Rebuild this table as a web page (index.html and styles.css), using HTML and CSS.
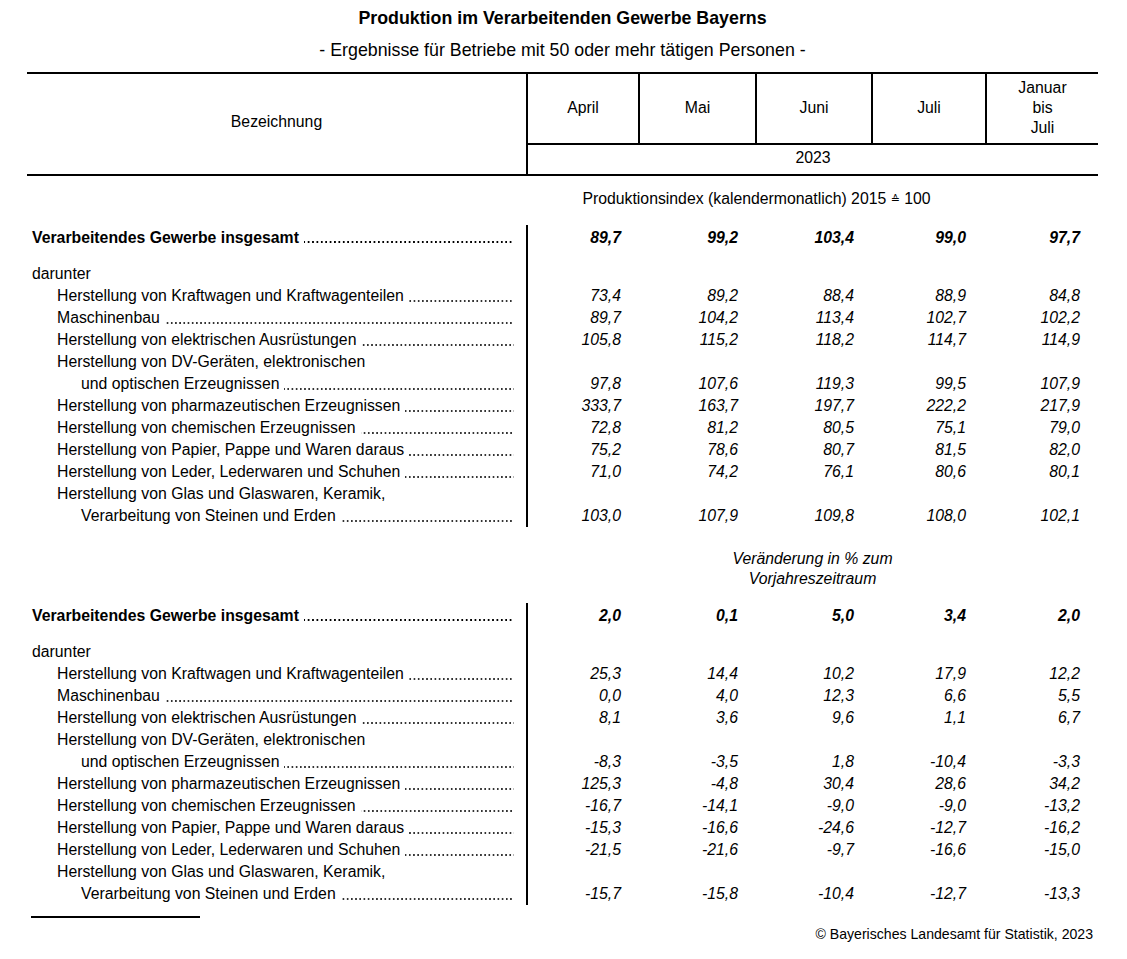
FILE: index.html
```html
<!DOCTYPE html>
<html lang="de">
<head>
<meta charset="utf-8">
<title>Produktion im Verarbeitenden Gewerbe Bayerns</title>
<link rel="stylesheet" href="styles.css">
</head>
<body>
<div class="page">
  <h1 class="title">Produktion im Verarbeitenden Gewerbe Bayerns</h1>
  <p class="subtitle">- Ergebnisse für Betriebe mit 50 oder mehr tätigen Personen -</p>
  <table class="tbl">
    <colgroup>
      <col class="c-lbl"><col class="c-apr"><col class="c-mai"><col class="c-jun"><col class="c-jul"><col class="c-jan">
    </colgroup>
    <thead>
      <tr class="h1">
        <th rowspan="2" class="h-lbl">Bezeichnung</th>
        <th class="h-m">April</th>
        <th class="h-m">Mai</th>
        <th class="h-m">Juni</th>
        <th class="h-m">Juli</th>
        <th class="h-m h-last">Januar<br>bis<br>Juli</th>
      </tr>
      <tr class="h2">
        <th colspan="5" class="h-year">2023</th>
      </tr>
    </thead>
    <tbody>
      <tr class="cap cap1">
        <td></td>
        <td colspan="4">Produktionsindex (kalendermonatlich) 2015 <span class="corr">≙</span> 100</td>
        <td></td>
      </tr>
      <tr class="tot">
        <td class="lbl"><div class="l"><span class="t">Verarbeitendes Gewerbe insgesamt</span><span class="dots"></span></div></td>
        <td class="n">89,7</td><td class="n">99,2</td><td class="n">103,4</td><td class="n jl">99,0</td><td class="n">97,7</td>
      </tr>
      <tr class="gap"><td class="lbl"></td><td colspan="5"></td></tr>
      <tr class="row"><td class="lbl"><div class="l">darunter</div></td><td colspan="5"></td></tr>
      <tr class="row"><td class="lbl in1"><div class="l"><span class="t">Herstellung von Kraftwagen und Kraftwagenteilen</span><span class="dots"></span></div></td>
        <td class="n">73,4</td><td class="n">89,2</td><td class="n">88,4</td><td class="n jl">88,9</td><td class="n">84,8</td></tr>
      <tr class="row"><td class="lbl in1"><div class="l"><span class="t">Maschinenbau</span><span class="dots"></span></div></td>
        <td class="n">89,7</td><td class="n">104,2</td><td class="n">113,4</td><td class="n jl">102,7</td><td class="n">102,2</td></tr>
      <tr class="row"><td class="lbl in1"><div class="l"><span class="t">Herstellung von elektrischen Ausrüstungen</span><span class="dots"></span></div></td>
        <td class="n">105,8</td><td class="n">115,2</td><td class="n">118,2</td><td class="n jl">114,7</td><td class="n">114,9</td></tr>
      <tr class="row"><td class="lbl in1"><div class="l">Herstellung von DV-Geräten, elektronischen</div></td><td colspan="5"></td></tr>
      <tr class="row"><td class="lbl in2"><div class="l"><span class="t">und optischen Erzeugnissen</span><span class="dots"></span></div></td>
        <td class="n">97,8</td><td class="n">107,6</td><td class="n">119,3</td><td class="n jl">99,5</td><td class="n">107,9</td></tr>
      <tr class="row"><td class="lbl in1"><div class="l"><span class="t">Herstellung von pharmazeutischen Erzeugnissen</span><span class="dots"></span></div></td>
        <td class="n">333,7</td><td class="n">163,7</td><td class="n">197,7</td><td class="n jl">222,2</td><td class="n">217,9</td></tr>
      <tr class="row"><td class="lbl in1"><div class="l"><span class="t">Herstellung von chemischen Erzeugnissen</span><span class="dots"></span></div></td>
        <td class="n">72,8</td><td class="n">81,2</td><td class="n">80,5</td><td class="n jl">75,1</td><td class="n">79,0</td></tr>
      <tr class="row"><td class="lbl in1"><div class="l"><span class="t">Herstellung von Papier, Pappe und Waren daraus</span><span class="dots"></span></div></td>
        <td class="n">75,2</td><td class="n">78,6</td><td class="n">80,7</td><td class="n jl">81,5</td><td class="n">82,0</td></tr>
      <tr class="row"><td class="lbl in1"><div class="l"><span class="t">Herstellung von Leder, Lederwaren und Schuhen</span><span class="dots"></span></div></td>
        <td class="n">71,0</td><td class="n">74,2</td><td class="n">76,1</td><td class="n jl">80,6</td><td class="n">80,1</td></tr>
      <tr class="row"><td class="lbl in1"><div class="l">Herstellung von Glas und Glaswaren, Keramik,</div></td><td colspan="5"></td></tr>
      <tr class="row"><td class="lbl in2"><div class="l"><span class="t">Verarbeitung von Steinen und Erden</span><span class="dots"></span></div></td>
        <td class="n">103,0</td><td class="n">107,9</td><td class="n">109,8</td><td class="n jl">108,0</td><td class="n">102,1</td></tr>

      <tr class="cap cap2">
        <td></td>
        <td></td>
        <td colspan="3">Veränderung in % zum<br>Vorjahreszeitraum</td>
        <td></td>
      </tr>
      <tr class="tot">
        <td class="lbl"><div class="l"><span class="t">Verarbeitendes Gewerbe insgesamt</span><span class="dots"></span></div></td>
        <td class="n">2,0</td><td class="n">0,1</td><td class="n">5,0</td><td class="n jl">3,4</td><td class="n">2,0</td>
      </tr>
      <tr class="gap"><td class="lbl"></td><td colspan="5"></td></tr>
      <tr class="row"><td class="lbl"><div class="l">darunter</div></td><td colspan="5"></td></tr>
      <tr class="row"><td class="lbl in1"><div class="l"><span class="t">Herstellung von Kraftwagen und Kraftwagenteilen</span><span class="dots"></span></div></td>
        <td class="n">25,3</td><td class="n">14,4</td><td class="n">10,2</td><td class="n jl">17,9</td><td class="n">12,2</td></tr>
      <tr class="row"><td class="lbl in1"><div class="l"><span class="t">Maschinenbau</span><span class="dots"></span></div></td>
        <td class="n">0,0</td><td class="n">4,0</td><td class="n">12,3</td><td class="n jl">6,6</td><td class="n">5,5</td></tr>
      <tr class="row"><td class="lbl in1"><div class="l"><span class="t">Herstellung von elektrischen Ausrüstungen</span><span class="dots"></span></div></td>
        <td class="n">8,1</td><td class="n">3,6</td><td class="n">9,6</td><td class="n jl">1,1</td><td class="n">6,7</td></tr>
      <tr class="row"><td class="lbl in1"><div class="l">Herstellung von DV-Geräten, elektronischen</div></td><td colspan="5"></td></tr>
      <tr class="row"><td class="lbl in2"><div class="l"><span class="t">und optischen Erzeugnissen</span><span class="dots"></span></div></td>
        <td class="n">-8,3</td><td class="n">-3,5</td><td class="n">1,8</td><td class="n jl">-10,4</td><td class="n">-3,3</td></tr>
      <tr class="row"><td class="lbl in1"><div class="l"><span class="t">Herstellung von pharmazeutischen Erzeugnissen</span><span class="dots"></span></div></td>
        <td class="n">125,3</td><td class="n">-4,8</td><td class="n">30,4</td><td class="n jl">28,6</td><td class="n">34,2</td></tr>
      <tr class="row"><td class="lbl in1"><div class="l"><span class="t">Herstellung von chemischen Erzeugnissen</span><span class="dots"></span></div></td>
        <td class="n">-16,7</td><td class="n">-14,1</td><td class="n">-9,0</td><td class="n jl">-9,0</td><td class="n">-13,2</td></tr>
      <tr class="row"><td class="lbl in1"><div class="l"><span class="t">Herstellung von Papier, Pappe und Waren daraus</span><span class="dots"></span></div></td>
        <td class="n">-15,3</td><td class="n">-16,6</td><td class="n">-24,6</td><td class="n jl">-12,7</td><td class="n">-16,2</td></tr>
      <tr class="row"><td class="lbl in1"><div class="l"><span class="t">Herstellung von Leder, Lederwaren und Schuhen</span><span class="dots"></span></div></td>
        <td class="n">-21,5</td><td class="n">-21,6</td><td class="n">-9,7</td><td class="n jl">-16,6</td><td class="n">-15,0</td></tr>
      <tr class="row"><td class="lbl in1"><div class="l">Herstellung von Glas und Glaswaren, Keramik,</div></td><td colspan="5"></td></tr>
      <tr class="row"><td class="lbl in2"><div class="l"><span class="t">Verarbeitung von Steinen und Erden</span><span class="dots"></span></div></td>
        <td class="n">-15,7</td><td class="n">-15,8</td><td class="n">-10,4</td><td class="n jl">-12,7</td><td class="n">-13,3</td></tr>
    </tbody>
  </table>
  <div class="foot">
    <div class="foot-rule"></div>
    <p class="copy">© Bayerisches Landesamt für Statistik, 2023</p>
  </div>
</div>
</body>
</html>
```
FILE: styles.css
```css
html, body {
  margin: 0;
  padding: 0;
  background: #ffffff;
  color: #000000;
}

body {
  font-family: "Liberation Sans", Arial, sans-serif;
  font-size: 15.8px;
}

.page {
  width: 1127px;
  padding: 0 29px 0 27px;
  box-sizing: border-box;
}

.title {
  margin: 0;
  padding-top: 8px;
  height: 22px;
  line-height: 20px;
  font-size: 17.8px;
  font-weight: bold;
  text-align: center;
}

.subtitle {
  margin: 0;
  padding-top: 10px;
  height: 32px;
  line-height: 20px;
  font-size: 17.8px;
  text-align: center;
}

.tbl {
  width: 1071px;
  border-collapse: collapse;
  table-layout: fixed;
}

.c-lbl { width: 500px; }
.c-apr { width: 112px; }
.c-mai { width: 117px; }
.c-jun { width: 116px; }
.c-jul { width: 114px; }
.c-jan { width: 112px; }

.tbl th, .tbl td {
  padding: 0;
  font-weight: normal;
  line-height: 20px;
}

.h1 th {
  border-top: 2px solid #000;
}

.h-lbl {
  border-right: 2px solid #000;
  border-bottom: 2px solid #000;
  text-align: center;
  vertical-align: middle;
  padding-bottom: 4px !important;
}

.h-m {
  height: 71px;
  border-bottom: 2px solid #000;
  border-right: 2px solid #000;
  text-align: center;
  vertical-align: middle;
  padding-bottom: 1px !important;
  box-sizing: border-box;
}

.h-last {
  border-right: none;
}

.h-year {
  height: 26px;
  border-bottom: 2px solid #000;
  text-align: center;
  vertical-align: middle;
  padding-bottom: 3px !important;
}

.cap td {
  text-align: center;
}

.cap1 td {
  padding-top: 13px;
  padding-bottom: 15px;
}

.corr {
  font-size: 11px;
  font-family: "DejaVu Sans", sans-serif;
  vertical-align: 1px;
}

.cap2 td {
  padding-top: 22px;
  padding-bottom: 14px;
  font-style: italic;
}

.lbl {
  border-right: 2px solid #000;
  padding-left: 5px !important;
  padding-right: 12px !important;
}

.lbl.in1 { padding-left: 30px !important; }
.lbl.in2 { padding-left: 54px !important; }

.l {
  display: flex;
  white-space: nowrap;
  line-height: 22px;
}

.l .t {
  flex: none;
}

.l .dots {
  flex: 1;
  min-width: 0;
  margin-left: 5px;
  background-image: linear-gradient(to right, #333 1.3px, transparent 1.3px);
  background-size: 4.2px 1.5px;
  background-repeat: repeat-x;
  background-position: right 0 bottom 6px;
}

.tot td {
  height: 26px;
  font-weight: bold;
}

.tot .l { line-height: 26px; }

.tot .l .dots {
  background-image: linear-gradient(to right, #000 2px, transparent 2px);
  background-size: 4.4px 2px;
  background-position: right 0 bottom 8px;
}

.gap td {
  height: 12px;
}

.row td {
  height: 22px;
}

.n {
  text-align: right;
  font-style: italic;
  padding-right: 18px !important;
  line-height: 22px !important;
}

.n.jl { padding-right: 20px !important; }

.foot {
  padding-top: 11px;
}

.foot-rule {
  width: 169px;
  height: 2px;
  margin-left: 4px;
  background: #000;
}

.copy {
  margin: 0;
  padding-top: 7px;
  padding-right: 5px;
  text-align: right;
  font-size: 14.1px;
  line-height: 18px;
}
```
